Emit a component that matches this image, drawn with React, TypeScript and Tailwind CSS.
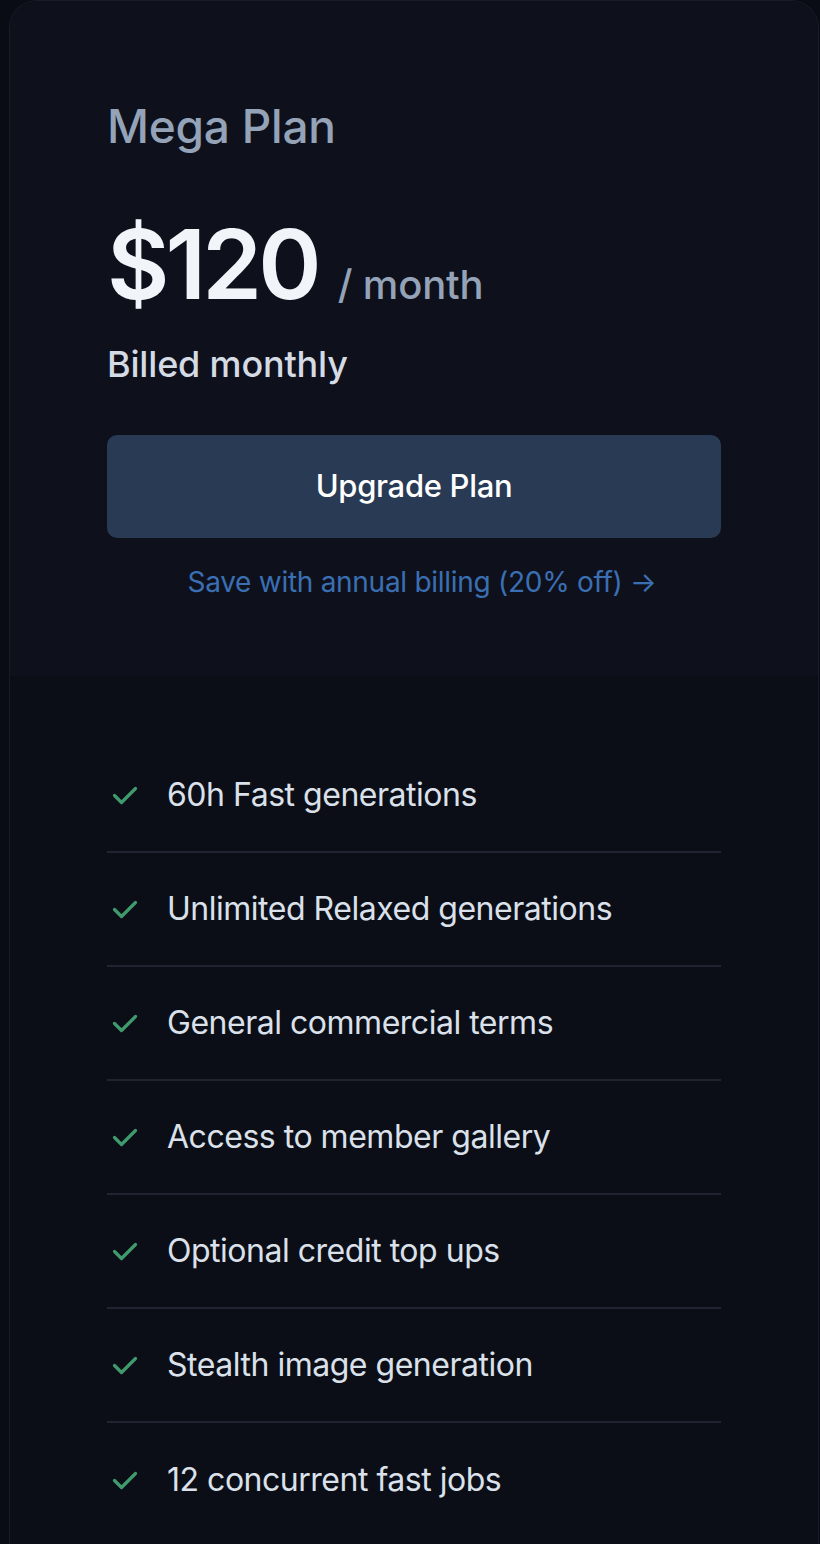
const features = [
  '60h Fast generations',
  'Unlimited Relaxed generations',
  'General commercial terms',
  'Access to member gallery',
  'Optional credit top ups',
  'Stealth image generation',
  '12 concurrent fast jobs',
];

function Check() {
  return (
    <svg className="w-[26px] h-[19px] text-[#3f9a6e] shrink-0" viewBox="0 0 26 19" fill="none" stroke="currentColor" strokeWidth="3.2" strokeLinecap="round" strokeLinejoin="round">
      <path d="M2.5 9.5l7 7L23.5 2.5" />
    </svg>
  );
}

export default function App() {
  return (
    <div className="min-h-[1544px] bg-[#090c14] pl-[9px] pr-[1px] font-['Inter',sans-serif]">
      <div className="min-h-[1544px] rounded-t-[28px] border border-b-0 border-[#171c27] bg-[#0b0e17] overflow-hidden">
        <div className="bg-[#0e111c] px-[97px] pt-[97px] h-[675px]">
          <h2 className="text-[46px] leading-[56px] font-medium text-[#94a3b8] tracking-[-0.005em]">Mega Plan</h2>
          <div className="mt-[60px] flex items-baseline gap-[20px]">
            <span className="text-[96px] leading-[100px] font-semibold text-[#f1f5f9] tracking-[-0.04em]">$120</span>
            <span className="text-[40px] font-medium text-[#94a3b8] tracking-[-0.005em]">/ month</span>
          </div>
          <p className="mt-[29px] text-[36px] leading-[40px] font-medium text-[#d5dbe4] tracking-[-0.005em]">Billed monthly</p>
          <button type="button" className="mt-[51px] w-full h-[103px] rounded-[10px] bg-[#293a55] text-[31px] font-medium text-white tracking-[-0.01em]">
            Upgrade Plan
          </button>
          <p className="mt-[26px] pl-[16px] text-center text-[28px] leading-[36px] text-[#3b6fb3] tracking-[-0.01em]">
            Save with annual billing (20% off) →
          </p>
        </div>
        <ul className="px-[97px] pt-[63px]">
          {features.map((f, i) => (
            <li
              key={f}
              className={`flex items-center gap-[29px] h-[114px] pl-[5px] ${i < features.length - 1 ? 'border-b-2 border-[#1f2430]' : ''}`}
            >
              <Check />
              <span className="text-[32px] text-[#dbe1ea] tracking-[-0.015em]">{f}</span>
            </li>
          ))}
        </ul>
      </div>
    </div>
  );
}
